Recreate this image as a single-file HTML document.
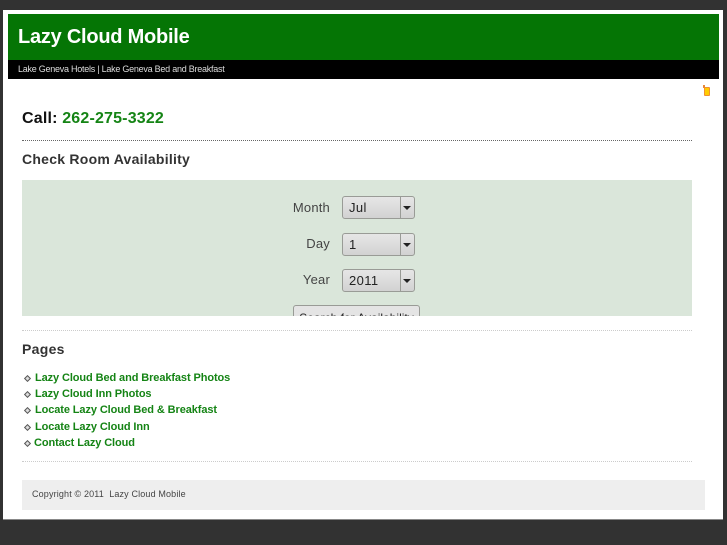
<!DOCTYPE html>
<html><head><meta charset="utf-8"><style>
html,body{margin:0;padding:0}
body{width:727px;height:545px;background:#323232;position:relative;overflow:hidden;font-family:"Liberation Sans",sans-serif}
div,a,span{position:absolute;white-space:nowrap}
.sel{left:342px;width:71px;height:21px;border:1px solid #999b96;border-radius:3px;background:linear-gradient(#e6e6e6,#d2d2d2);font-size:13px;letter-spacing:.4px;color:#222;line-height:22px;text-indent:6px}
.sel i{position:absolute;left:57px;top:0;width:1px;height:21px;background:#999b96}
.sel b{position:absolute;left:60px;top:9px;width:0;height:0;border:4px solid transparent;border-top:4px solid #222;border-bottom:0}
.lbl{font-size:13px;letter-spacing:.2px;color:#444;right:397px;line-height:15px}
.lnk{left:35px;font-size:11px;font-weight:bold;color:#158415;line-height:14px;letter-spacing:-.1px}
.dm{left:25px;width:3px;height:3px;transform:rotate(45deg);border:1px solid #555;background:#ddd}
.dot{left:22px;width:670px;height:0;border-top:1px dotted #ccc}
</style></head><body>
<div style="left:3px;top:10px;width:720px;height:509px;background:#fff;border-bottom:1px solid #888"></div>
<div style="left:8px;top:14px;width:711px;height:46px;background:#057505"></div>
<div style="left:18px;top:25px;font-size:20px;font-weight:bold;color:#fff;line-height:24px;letter-spacing:-.24px">Lazy Cloud Mobile</div>
<div style="left:8px;top:60px;width:711px;height:19px;background:#000"></div>
<div style="left:18px;top:63px;font-size:9px;color:#ddd;line-height:12px;letter-spacing:-.25px">Lake Geneva Hotels | Lake Geneva Bed and Breakfast</div>
<div style="left:703px;top:85px;width:2px;height:3px;background:#e8883a"></div>
<div style="left:704px;top:87px;width:4px;height:7px;background:#fc0;border:1px solid #f09030;border-radius:1px"></div>
<div style="left:22px;top:109px;font-size:16px;font-weight:bold;color:#111;line-height:20px;letter-spacing:.18px">Call: <span style="position:static;color:#158415">262-275-3322</span></div>
<div class="dot" style="top:140px;border-top-color:#666"></div>
<div style="left:22px;top:150px;font-size:14px;font-weight:bold;color:#333;line-height:18px;letter-spacing:.25px">Check Room Availability</div>
<div style="left:22px;top:180px;width:670px;height:136px;background:#dae6da;overflow:hidden">
<div style="left:271px;top:125px;width:125px;height:24px;border:1px solid #999b96;border-radius:3px;background:#e4e4e4;font-size:12px;text-align:center;line-height:24px;color:#222">Search for Availability</div>
</div>
<div class="lbl" style="top:200px">Month</div>
<div class="sel" style="top:196px">Jul<i></i><b></b></div>
<div class="lbl" style="top:236px">Day</div>
<div class="sel" style="top:233px">1<i></i><b></b></div>
<div class="lbl" style="top:272px">Year</div>
<div class="sel" style="top:269px">2011<i></i><b></b></div>
<div class="dot" style="top:330px"></div>
<div style="left:22px;top:340px;font-size:14px;font-weight:bold;color:#333;line-height:18px;letter-spacing:.3px">Pages</div>
<div class="dm" style="top:376px"></div><a class="lnk" style="top:371px">Lazy Cloud Bed and Breakfast Photos</a>
<div class="dm" style="top:392px"></div><a class="lnk" style="top:387px">Lazy Cloud Inn Photos</a>
<div class="dm" style="top:408px"></div><a class="lnk" style="top:403px">Locate Lazy Cloud Bed &amp; Breakfast</a>
<div class="dm" style="top:425px"></div><a class="lnk" style="top:420px">Locate Lazy Cloud Inn</a>
<div class="dm" style="top:441px"></div><a class="lnk" style="top:436px;left:34px">Contact Lazy Cloud</a>
<div class="dot" style="top:461px"></div>
<div style="left:22px;top:480px;width:683px;height:30px;background:#eee"></div>
<div style="left:32px;top:488px;font-size:9px;color:#444;line-height:13px;letter-spacing:.15px">Copyright © 2011 &nbsp;Lazy Cloud Mobile</div>
</body></html>
